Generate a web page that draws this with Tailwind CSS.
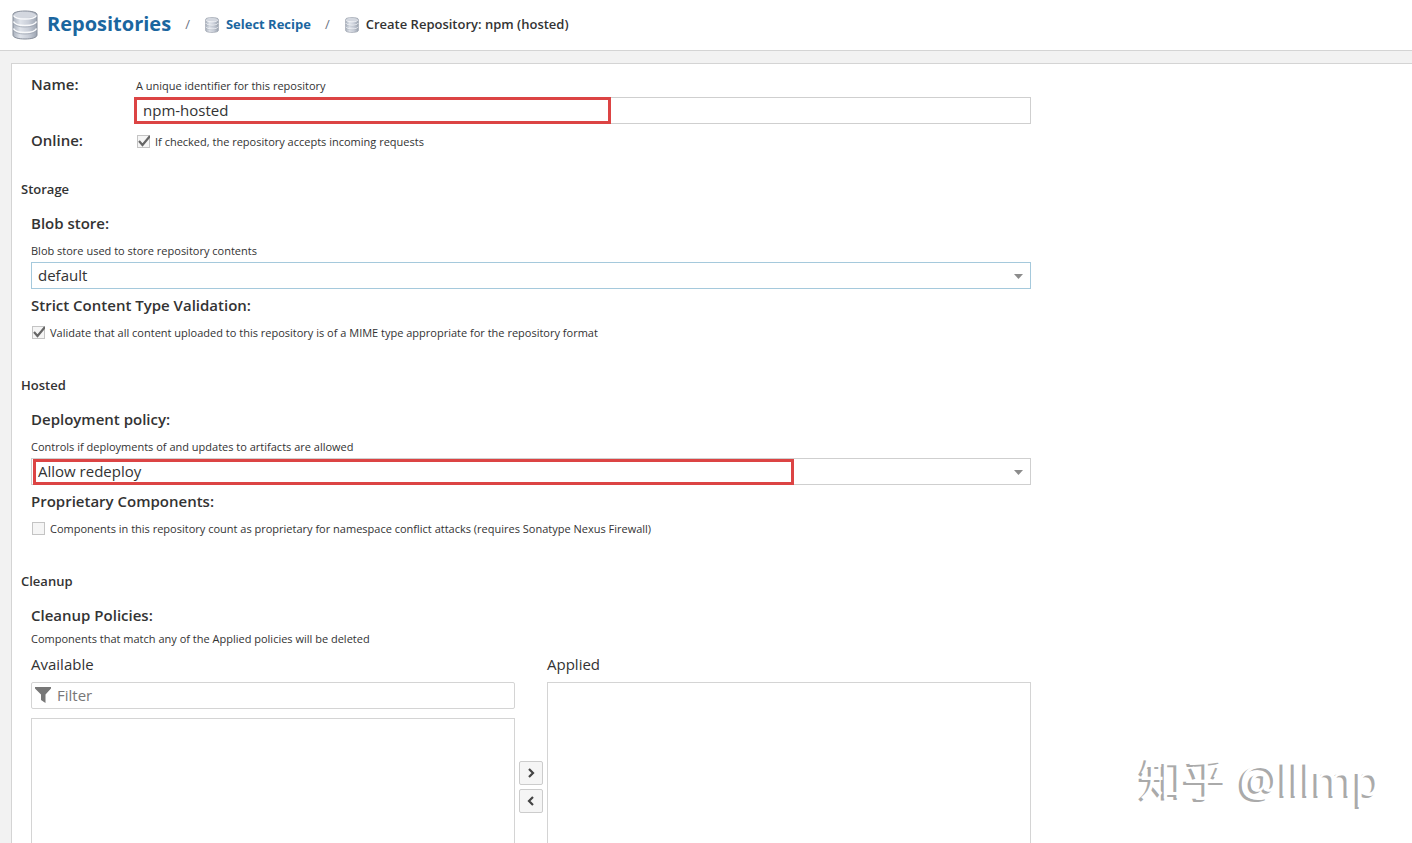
<!DOCTYPE html>
<html lang="en">
<head>
    <meta charset="UTF-8">
    <meta name="viewport" content="width=device-width, initial-scale=1.0">
    <title>Create Repository: npm (hosted)</title>
    <script src="https://cdn.jsdelivr.net/npm/@tailwindcss/browser@4"></script>
</head>
<body class="h-screen overflow-hidden bg-[#f2f2f2] font-['Open_Sans',sans-serif] text-[#333333]">
    <svg class="absolute size-0">
        <defs>
            <linearGradient id="metal" x1="0" x2="1" y1="0" y2="0">
                <stop offset="0" stop-color="#a9b1bd" />
                <stop offset="0.3" stop-color="#dfe3ea" />
                <stop offset="0.65" stop-color="#c9ced8" />
                <stop offset="1" stop-color="#9ca4b1" />
            </linearGradient>
        </defs>
        <symbol id="database" viewBox="0 0 26 30">
            <path d="M1 4.500C1 2.500 6 1 13 1s12 1.500 12 3.500v20.500c0 2.500-5 4-12 4s-12-1.500-12-4z" fill="url(#metal)" stroke="#878e9a" />
            <ellipse cx="13" cy="5" rx="11" ry="3" fill="#d3d7df" />
            <path d="M1.500 5.500c1 2 5 3.500 11.500 3.500s10.500-1.500 11.500-3.500M1.500 11.500c1 2.500 5 4 11.500 4s10.500-1.500 11.500-4M1.500 18.500c1 2.500 5 4 11.500 4s10.500-1.500 11.500-4" fill="none" stroke="#f8f9fb" stroke-width="1.500" />
            <path d="M1.500 13c1 2.500 5 4 11.500 4s10.500-1.500 11.500-4M1.500 20c1 2.500 5 4 11.500 4s10.500-1.500 11.500-4" fill="none" stroke="#9ba2ae" stroke-width="0.700" />
        </symbol>
    </svg>

    <div class="flex h-full flex-col">
        <!-- Breadcrumb -->
        <header class="flex h-[51px] shrink-0 items-center border-b border-[#d4d4d4] bg-white pl-3 text-[13px] font-semibold">
            <a href="#" class="flex h-8 items-center text-[20px] font-bold text-[#1b669f]">
                <svg class="mr-[9px] h-[30px] w-[26px]"><use href="#database" /></svg>
                <span class="pb-[2px]">Repositories</span>
            </a>
            <span class="mx-[14px] font-normal text-gray-500">/</span>
            <a href="#" class="flex items-center font-bold text-[#1b669f]">
                <svg class="mr-[6px] h-4 w-4"><use href="#database" /></svg>
                Select Recipe
            </a>
            <span class="mx-[14px] font-normal text-gray-500">/</span>
            <h1 class="flex items-center">
                <svg class="mr-[6px] h-4 w-4"><use href="#database" /></svg>
                Create Repository: npm (hosted)
            </h1>
        </header>

        <!-- Form panel -->
        <main class="mt-3 ml-[11px] flex-1 overflow-hidden border-t border-l border-[#d4d4d4] bg-white">
            <form class="max-w-[1019px] pt-3 text-[11px] leading-5">
                <div class="flex pl-[19px]">
                    <label for="name" class="w-[105px] shrink-0 text-[15px] font-semibold leading-4">Name:</label>
                    <div class="flex-1">
                        <p>A unique identifier for this repository</p>
                        <div class="relative mt-px">
                            <input id="name" type="text" value="npm-hosted" class="block h-[27px] w-full border border-[#cfcfcf] bg-white px-[6px] pb-[2px] text-[15px] outline-none">
                            <div class="pointer-events-none absolute inset-y-0 -left-[2px] w-[477px] border-3 border-[#dc4444]"></div>
                        </div>
                    </div>
                </div>
                <div class="mt-2 flex pl-[19px]">
                    <label for="online" class="w-[105px] shrink-0 text-[15px] font-semibold leading-4">Online:</label>
                    <label class="flex items-center gap-[5px]">
                        <span class="relative block size-[14px]">
                            <input id="online" type="checkbox" checked class="peer ml-px block size-[13px] appearance-none border border-[#c4c4c4] bg-[#f5f5f5]">
                            <svg class="pointer-events-none absolute inset-0 hidden h-[13px] w-[14px] peer-checked:block" viewBox="0 0 14 13"><path d="M3 6l3.500 4L14 1" fill="none" stroke="#666666" stroke-width="2.200" /></svg>
                        </span>
                        If checked, the repository accepts incoming requests
                    </label>
                </div>

                <!-- Storage -->
                <h2 class="mt-[27px] pl-[9px] text-[13px] font-semibold leading-5">Storage</h2>
                <div class="mt-[14px] pl-[19px]">
                    <label for="blob" class="block text-[15px] font-semibold leading-5">Blob store:</label>
                    <p class="mt-2">Blob store used to store repository contents</p>
                    <div class="relative mt-px">
                        <select id="blob" class="block h-[27px] w-full appearance-none border border-[#a5c9dc] bg-white px-[6px] pb-[2px] text-[15px] outline-none">
                            <option>default</option>
                        </select>
                        <svg class="pointer-events-none absolute top-3 right-2 h-[5px] w-[9px]" viewBox="0 0 9 5"><path d="M0 0h9L4.500 5z" fill="#8c8c8c" /></svg>
                    </div>
                    <div class="mt-[6px] text-[15px] font-semibold leading-5">Strict Content Type Validation:</div>
                    <label class="mt-2 flex items-center gap-[5px]">
                        <span class="relative block size-[14px]">
                            <input type="checkbox" checked class="peer ml-px block size-[13px] appearance-none border border-[#c4c4c4] bg-[#f5f5f5]">
                            <svg class="pointer-events-none absolute inset-0 hidden h-[13px] w-[14px] peer-checked:block" viewBox="0 0 14 13"><path d="M3 6l3.500 4L14 1" fill="none" stroke="#666666" stroke-width="2.200" /></svg>
                        </span>
                        Validate that all content uploaded to this repository is of a MIME type appropriate for the repository format
                    </label>
                </div>

                <!-- Hosted -->
                <h2 class="mt-8 pl-[9px] text-[13px] font-semibold leading-5">Hosted</h2>
                <div class="mt-[14px] pl-[19px]">
                    <label for="policy" class="block text-[15px] font-semibold leading-5">Deployment policy:</label>
                    <p class="mt-2">Controls if deployments of and updates to artifacts are allowed</p>
                    <div class="relative mt-px">
                        <select id="policy" class="block h-[27px] w-full appearance-none border border-[#cfcfcf] bg-white px-[6px] pb-[2px] text-[15px] outline-none">
                            <option>Allow redeploy</option>
                        </select>
                        <svg class="pointer-events-none absolute top-3 right-2 h-[5px] w-[9px]" viewBox="0 0 9 5"><path d="M0 0h9L4.500 5z" fill="#8c8c8c" /></svg>
                        <div class="pointer-events-none absolute top-px bottom-0 left-[2px] w-[761px] border-3 border-[#dc4444]"></div>
                    </div>
                    <label for="proprietary" class="mt-[6px] block text-[15px] font-semibold leading-5">Proprietary Components:</label>
                    <label class="mt-2 flex items-center gap-[5px]">
                        <span class="relative block size-[14px]">
                            <input id="proprietary" type="checkbox" class="peer ml-px block size-[13px] appearance-none border border-[#c4c4c4] bg-[#f5f5f5]">
                            <svg class="pointer-events-none absolute inset-0 hidden h-[13px] w-[14px] peer-checked:block" viewBox="0 0 14 13"><path d="M3 6l3.500 4L14 1" fill="none" stroke="#666666" stroke-width="2.200" /></svg>
                        </span>
                        Components in this repository count as proprietary for namespace conflict attacks (requires Sonatype Nexus Firewall)
                    </label>
                </div>

                <!-- Cleanup -->
                <h2 class="mt-8 pl-[9px] text-[13px] font-semibold leading-5">Cleanup</h2>
                <div class="mt-[14px] pl-[19px]">
                    <div class="text-[15px] font-semibold leading-5">Cleanup Policies:</div>
                    <p class="mt-1">Components that match any of the Applied policies will be deleted</p>
                    <div class="mt-[5px] flex gap-1 text-[15px] leading-5">
                        <div class="flex-1">
                            <label for="filter" class="block">Available</label>
                            <div class="relative mt-2">
                                <input id="filter" type="text" placeholder="Filter" class="block h-[27px] w-full rounded-xs border border-[#d4d4d4] bg-white pr-2 pb-[2px] pl-[25px] placeholder:text-[#777777] outline-none">
                                <svg class="pointer-events-none absolute top-[5px] left-1 size-4" viewBox="0 0 16 16"><path d="M0 0h16v1.500l-5.500 6v8.500l-4.500-3v-5.500L0 1.500z" fill="#777777" /></svg>
                            </div>
                            <div class="mt-[9px] h-[201px] border border-[#d4d4d4]"></div>
                        </div>
                        <div class="flex flex-col justify-center gap-1">
                            <button type="button" aria-label="Add" class="flex size-6 items-center justify-center rounded-xs border border-[#cccccc] bg-[#f5f5f5]">
                                <svg class="size-[10px]" viewBox="0 0 10 10"><path d="M3 1l4 4-4 4" fill="none" stroke="#444444" stroke-width="2.200" /></svg>
                            </button>
                            <button type="button" aria-label="Remove" class="flex size-6 items-center justify-center rounded-xs border border-[#cccccc] bg-[#f5f5f5]">
                                <svg class="size-[10px]" viewBox="0 0 10 10"><path d="M7 1L3 5l4 4" fill="none" stroke="#444444" stroke-width="2.200" /></svg>
                            </button>
                        </div>
                        <div class="flex flex-1 flex-col">
                            <div>Applied</div>
                            <div class="mt-2 flex-1 border border-[#d4d4d4]"></div>
                        </div>
                    </div>
                </div>
            </form>
        </main>
    </div>

    <!-- Watermark -->
    <div class="pointer-events-none absolute right-[31px] bottom-[36px] font-['Noto_Sans','Noto_Sans_CJK_SC',sans-serif] text-[44px] leading-[56px] text-white text-shadow-[-3px_2px_0_#aaaaaa]">知乎 @lllmp</div>
</body>
</html>
